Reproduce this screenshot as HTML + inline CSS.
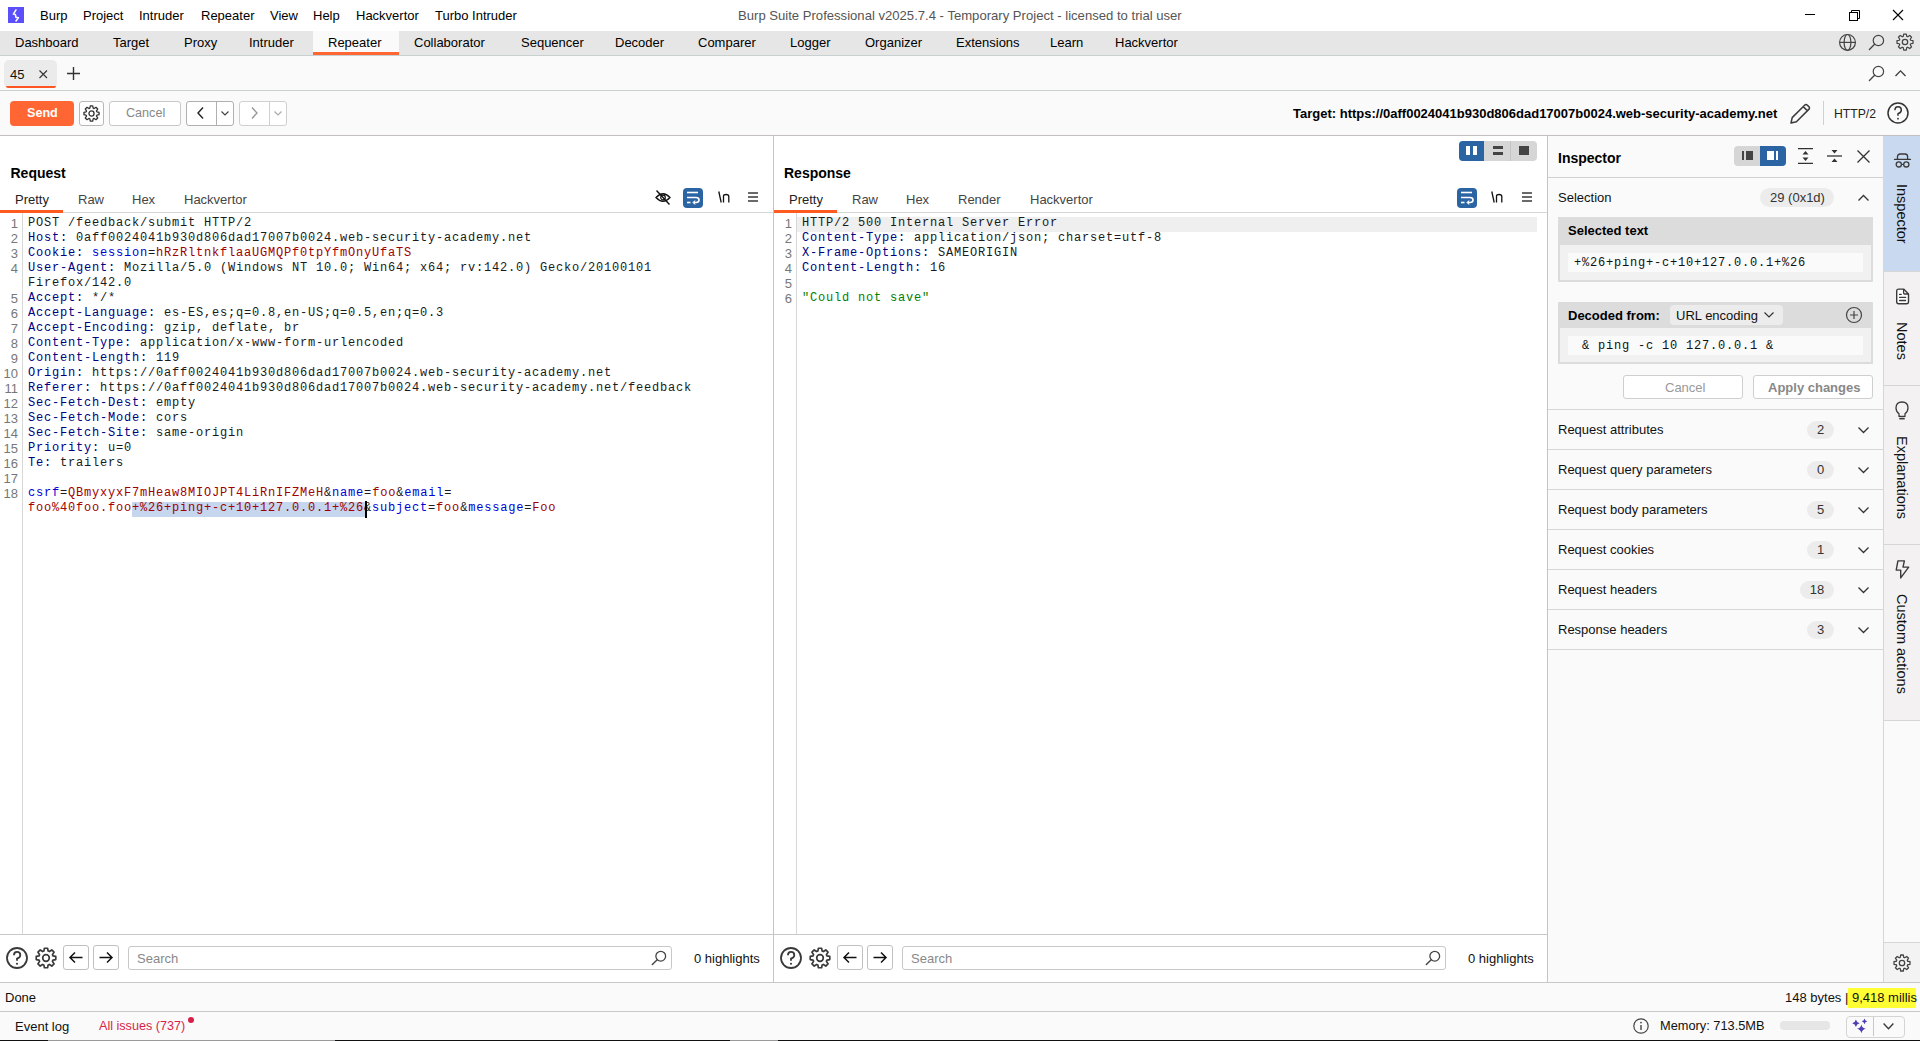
<!DOCTYPE html>
<html><head><meta charset="utf-8">
<style>
*{box-sizing:border-box;margin:0;padding:0}
html,body{width:1920px;height:1041px;overflow:hidden;background:#f9f9f9;font-family:"Liberation Sans",sans-serif;font-size:13px;color:#000}
.a{position:absolute}
.t{position:absolute;white-space:pre;line-height:1}
.mono{font-family:"Liberation Mono",monospace;font-size:12px;letter-spacing:0.8px}
svg{position:absolute;overflow:visible}
</style></head><body>

<div class="a" style="left:0px;top:0px;width:1920px;height:31px;background:#fff;"></div>
<div class="a" style="left:8px;top:7px;width:16px;height:16px;background:#5b4ffc;"></div>
<svg style="left:8px;top:7px" width="16" height="16" viewBox="0 0 16 16"><path d="M8 2.8 L5.4 7.1 L7.4 7.4 L7.9 10.3 L10.4 10.8 L8 14" fill="none" stroke="#fff" stroke-width="1.5" stroke-linejoin="round" stroke-linecap="round"/></svg>
<div class="t" style="left:40px;top:9.00px;font-size:13px;color:#000;font-weight:normal;">Burp</div>
<div class="t" style="left:83px;top:9.00px;font-size:13px;color:#000;font-weight:normal;">Project</div>
<div class="t" style="left:139px;top:9.00px;font-size:13px;color:#000;font-weight:normal;">Intruder</div>
<div class="t" style="left:201px;top:9.00px;font-size:13px;color:#000;font-weight:normal;">Repeater</div>
<div class="t" style="left:270px;top:9.00px;font-size:13px;color:#000;font-weight:normal;">View</div>
<div class="t" style="left:313px;top:9.00px;font-size:13px;color:#000;font-weight:normal;">Help</div>
<div class="t" style="left:356px;top:9.00px;font-size:13px;color:#000;font-weight:normal;">Hackvertor</div>
<div class="t" style="left:435px;top:9.00px;font-size:13px;color:#000;font-weight:normal;">Turbo Intruder</div>
<div class="t" style="left:738px;top:8.91px;font-size:13.1px;color:#555;font-weight:normal;">Burp Suite Professional v2025.7.4 - Temporary Project - licensed to trial user</div>
<div class="a" style="left:1805px;top:14px;width:10px;height:1px;background:#000;"></div>
<svg style="left:1849px;top:10px" width="11" height="11" viewBox="0 0 11 11"><rect x="0.5" y="2.5" width="8" height="8" fill="none" stroke="#000" stroke-width="1"/><path d="M2.5 2.5 V0.5 H10.5 V8.5 H8.5" fill="none" stroke="#000" stroke-width="1"/></svg>
<svg style="left:1893px;top:10px" width="10" height="10" viewBox="0 0 10 10"><path d="M0 0 L10 10 M10 0 L0 10" stroke="#000" stroke-width="1.1"/></svg>
<div class="a" style="left:0px;top:31px;width:1920px;height:24px;background:#e6e6e6;"></div>
<div class="a" style="left:0px;top:55px;width:1920px;height:1px;background:#c9d0d0;"></div>
<div class="a" style="left:313px;top:31px;width:86px;height:24px;background:#fafafa;"></div>
<div class="a" style="left:313px;top:52px;width:86px;height:3px;background:#ff6633;"></div>
<div class="t" style="left:15px;top:35.50px;font-size:13px;color:#000;font-weight:normal;">Dashboard</div>
<div class="t" style="left:113px;top:35.50px;font-size:13px;color:#000;font-weight:normal;">Target</div>
<div class="t" style="left:184px;top:35.50px;font-size:13px;color:#000;font-weight:normal;">Proxy</div>
<div class="t" style="left:249px;top:35.50px;font-size:13px;color:#000;font-weight:normal;">Intruder</div>
<div class="t" style="left:328px;top:35.50px;font-size:13px;color:#000;font-weight:normal;">Repeater</div>
<div class="t" style="left:414px;top:35.50px;font-size:13px;color:#000;font-weight:normal;">Collaborator</div>
<div class="t" style="left:521px;top:35.50px;font-size:13px;color:#000;font-weight:normal;">Sequencer</div>
<div class="t" style="left:615px;top:35.50px;font-size:13px;color:#000;font-weight:normal;">Decoder</div>
<div class="t" style="left:698px;top:35.50px;font-size:13px;color:#000;font-weight:normal;">Comparer</div>
<div class="t" style="left:790px;top:35.50px;font-size:13px;color:#000;font-weight:normal;">Logger</div>
<div class="t" style="left:865px;top:35.50px;font-size:13px;color:#000;font-weight:normal;">Organizer</div>
<div class="t" style="left:956px;top:35.50px;font-size:13px;color:#000;font-weight:normal;">Extensions</div>
<div class="t" style="left:1050px;top:35.50px;font-size:13px;color:#000;font-weight:normal;">Learn</div>
<div class="t" style="left:1115px;top:35.50px;font-size:13px;color:#000;font-weight:normal;">Hackvertor</div>
<svg style="left:1839px;top:34px" width="17" height="17" viewBox="0 0 17 17"><circle cx="8.5" cy="8.4" r="7.9" fill="none" stroke="#444" stroke-width="1.2"/><ellipse cx="8.5" cy="8.4" rx="3.4" ry="7.9" fill="none" stroke="#444" stroke-width="1.2"/><path d="M0.6 8.4 H16.4" stroke="#444" stroke-width="1.2"/></svg>
<svg style="left:1868px;top:35px" width="16" height="16" viewBox="0 0 16 16"><circle cx="10.4" cy="5.5" r="5.2" fill="none" stroke="#444" stroke-width="1.2"/><path d="M6.6 9.3 L1.4 14.5" stroke="#444" stroke-width="1.32" stroke-linecap="round"/></svg>
<svg style="left:1896px;top:33px" width="18" height="18" viewBox="0 0 18 18"><path d="M7.24 3.33 L7.71 1.00 L10.29 1.00 L10.76 3.33 L11.77 3.75 L13.74 2.43 L15.57 4.26 L14.25 6.23 L14.67 7.24 L17.00 7.71 L17.00 10.29 L14.67 10.76 L14.25 11.77 L15.57 13.74 L13.74 15.57 L11.77 14.25 L10.76 14.67 L10.29 17.00 L7.71 17.00 L7.24 14.67 L6.23 14.25 L4.26 15.57 L2.43 13.74 L3.75 11.77 L3.33 10.76 L1.00 10.29 L1.00 7.71 L3.33 7.24 L3.75 6.23 L2.43 4.26 L4.26 2.43 L6.23 3.75 Z" fill="none" stroke="#444" stroke-width="1.25" stroke-linejoin="round"/><circle cx="9.0" cy="9.0" r="2.6999999999999997" fill="none" stroke="#444" stroke-width="1.25"/></svg>
<div class="a" style="left:0px;top:56px;width:1920px;height:34px;background:#fafafa;"></div>
<div class="a" style="left:0px;top:90px;width:1920px;height:1px;background:#c9d0d0;"></div>
<div class="a" style="left:4px;top:60px;width:53px;height:28px;background:#ebebeb;border-radius:5px"></div>
<div class="a" style="left:5.5px;top:86px;width:50px;height:2px;background:#ff5522;border-radius:0 0 3px 3px"></div>
<div class="t" style="left:10px;top:68.00px;font-size:13px;color:#111;font-weight:normal;">45</div>
<svg style="left:38.7px;top:70px" width="8.5" height="8.5" viewBox="0 0 8.5 8.5"><path d="M0.5 0.5 L8 8 M8 0.5 L0.5 8" stroke="#333" stroke-width="1.1"/></svg>
<svg style="left:67px;top:67px" width="13" height="13" viewBox="0 0 13 13"><path d="M6.5 0 V13 M0 6.5 H13" stroke="#333" stroke-width="1.4"/></svg>
<svg style="left:1868px;top:66px" width="16" height="16" viewBox="0 0 16 16"><circle cx="10.4" cy="5.5" r="5.2" fill="none" stroke="#444" stroke-width="1.2"/><path d="M6.6 9.3 L1.4 14.5" stroke="#444" stroke-width="1.32" stroke-linecap="round"/></svg>
<svg style="left:1895px;top:70px" width="11" height="7" viewBox="0 0 11 7"><path d="M0.5 6 L5.5 0.9 L10.5 6" fill="none" stroke="#3a3a3a" stroke-width="1.3"/></svg>
<div class="a" style="left:0px;top:91px;width:1920px;height:44px;background:#fafafa;"></div>
<div class="a" style="left:0px;top:135px;width:1920px;height:1px;background:#c4c0c0;"></div>
<div class="a" style="left:10px;top:101px;width:64px;height:25px;background:#ff6633;border-radius:4px"></div>
<div class="t" style="left:27px;top:107.33px;font-size:12.6px;color:#fff;font-weight:bold;">Send</div>
<div class="a" style="left:79px;top:101px;width:25px;height:25px;background:#fff;border:1px solid #b8b8b8;border-radius:3px"></div>
<svg style="left:83px;top:105px" width="17" height="17" viewBox="0 0 17 17"><path d="M6.84 3.14 L7.28 0.95 L9.72 0.95 L10.16 3.14 L11.12 3.54 L12.98 2.30 L14.70 4.02 L13.46 5.88 L13.86 6.84 L16.05 7.28 L16.05 9.72 L13.86 10.16 L13.46 11.12 L14.70 12.98 L12.98 14.70 L11.12 13.46 L10.16 13.86 L9.72 16.05 L7.28 16.05 L6.84 13.86 L5.88 13.46 L4.02 14.70 L2.30 12.98 L3.54 11.12 L3.14 10.16 L0.95 9.72 L0.95 7.28 L3.14 6.84 L3.54 5.88 L2.30 4.02 L4.02 2.30 L5.88 3.54 Z" fill="none" stroke="#333" stroke-width="1.3" stroke-linejoin="round"/><circle cx="8.5" cy="8.5" r="2.55" fill="none" stroke="#333" stroke-width="1.3"/></svg>
<div class="a" style="left:109px;top:101px;width:72px;height:25px;background:#fff;border:1px solid #c8c8c8;border-radius:3px"></div>
<div class="t" style="left:126px;top:107.33px;font-size:12.6px;color:#888;font-weight:normal;">Cancel</div>
<div class="a" style="left:186px;top:101px;width:48px;height:25px;background:#fff;border:1px solid #b0b0b0;border-radius:3px"></div>
<div class="a" style="left:216px;top:101px;width:1px;height:25px;background:#b0b0b0;"></div>
<svg style="left:197px;top:107px" width="7" height="12" viewBox="0 0 7 12"><path d="M6 0.5 L1 6 L6 11.5" fill="none" stroke="#222" stroke-width="1.4"/></svg>
<svg style="left:221px;top:111px" width="8" height="5" viewBox="0 0 8 5"><path d="M0.5 0.5 L4 4 L7.5 0.5" fill="none" stroke="#444" stroke-width="1.2"/></svg>
<div class="a" style="left:239px;top:101px;width:48px;height:25px;background:#fff;border:1px solid #d0d0d0;border-radius:3px"></div>
<div class="a" style="left:269px;top:101px;width:1px;height:25px;background:#d0d0d0;"></div>
<svg style="left:251px;top:107px" width="7" height="12" viewBox="0 0 7 12"><path d="M1 0.5 L6 6 L1 11.5" fill="none" stroke="#999" stroke-width="1.4"/></svg>
<svg style="left:274px;top:111px" width="8" height="5" viewBox="0 0 8 5"><path d="M0.5 0.5 L4 4 L7.5 0.5" fill="none" stroke="#aaa" stroke-width="1.2"/></svg>
<div class="t" style="left:1293px;top:107.00px;font-size:13px;color:#000;font-weight:bold;">Target: https://0aff0024041b930d806dad17007b0024.web-security-academy.net</div>
<svg style="left:1789px;top:102px" width="23" height="23" viewBox="0 0 23 23"><path d="M2 21 L3.2 15.6 L15.6 3.2 Q17 1.8 18.4 3.2 L19.8 4.6 Q21.2 6 19.8 7.4 L7.4 19.8 Z M14.2 4.6 L18.4 8.8" fill="none" stroke="#3a3a3a" stroke-width="1.5" stroke-linejoin="round"/></svg>
<div class="a" style="left:1823px;top:101px;width:1px;height:24px;background:#d0d0d0;"></div>
<div class="t" style="left:1834px;top:107.67px;font-size:12.2px;color:#222;font-weight:normal;">HTTP/2</div>
<svg style="left:1887px;top:102px" width="22" height="22" viewBox="0 0 22 22"><circle cx="11.0" cy="11.0" r="10.0" fill="none" stroke="#333" stroke-width="1.5"/><path d="M7.92 8.36 Q7.92 4.84 11.0 4.84 Q14.3 4.84 14.3 8.14 Q14.3 10.34 11.0 11.66 L11.0 13.86" fill="none" stroke="#333" stroke-width="1.5"/><circle cx="11.0" cy="16.72" r="0.8999999999999999" fill="#333"/></svg>
<div class="a" style="left:0px;top:136px;width:773px;height:798px;background:#fff;"></div>
<div class="a" style="left:773px;top:136px;width:1px;height:846px;background:#c4c4c4;"></div>
<div class="a" style="left:774px;top:136px;width:773px;height:798px;background:#fff;"></div>
<div class="a" style="left:1547px;top:136px;width:1px;height:846px;background:#c4c4c4;"></div>
<div class="a" style="left:1548px;top:136px;width:335px;height:846px;background:#fafafa;"></div>
<div class="a" style="left:1883px;top:136px;width:1px;height:846px;background:#d6d6d6;"></div>
<div class="a" style="left:1884px;top:136px;width:36px;height:846px;background:#fafafa;"></div>
<div class="t" style="left:10.5px;top:166.15px;font-size:14px;color:#000;font-weight:bold;">Request</div>
<div class="t" style="left:15px;top:193.00px;font-size:13px;color:#222;font-weight:normal;">Pretty</div>
<div class="t" style="left:78px;top:193.00px;font-size:13px;color:#444;font-weight:normal;">Raw</div>
<div class="t" style="left:132px;top:193.00px;font-size:13px;color:#444;font-weight:normal;">Hex</div>
<div class="t" style="left:184px;top:193.00px;font-size:13px;color:#444;font-weight:normal;">Hackvertor</div>
<div class="a" style="left:0px;top:212px;width:773px;height:1px;background:#d4d8d8;"></div>
<div class="a" style="left:0px;top:210px;width:63px;height:2.5px;background:#ff5a1f;"></div>
<svg style="left:655px;top:190px" width="16" height="15" viewBox="0 0 16 15"><path d="M1 7.5 Q8 0 15 7.5 Q8 15 1 7.5 Z" fill="none" stroke="#111" stroke-width="1.3"/><circle cx="8" cy="7.5" r="2.3" fill="none" stroke="#111" stroke-width="1.2"/><path d="M1.5 0.5 L14.5 14.5" stroke="#111" stroke-width="1.4"/></svg>
<div class="a" style="left:683px;top:188px;width:20px;height:20px;background:#2b64a3;border-radius:4px"></div>
<svg style="left:683px;top:188px" width="20" height="20" viewBox="0 0 20 20"><path d="M4 4.5 H15" stroke="#fff" stroke-width="1.6"/><path d="M4 9.5 H13 Q16 9.5 16 12 Q16 14.5 13 14.5 H11" fill="none" stroke="#fff" stroke-width="1.6"/><path d="M12 12.5 L10 14.5 L12 16.5" fill="#fff" stroke="#fff" stroke-width="1"/><path d="M4 14.5 H7.5" stroke="#fff" stroke-width="1.6"/></svg>
<svg style="left:718px;top:191px" width="12" height="12" viewBox="0 0 12 12"><path d="M0.8 0.5 L3.2 11.5" stroke="#111" stroke-width="1.3"/><path d="M5.5 11.5 V5 Q5.5 3.5 8 3.5 Q10.8 3.5 10.8 5.5 V11.5" fill="none" stroke="#111" stroke-width="1.3"/></svg>
<svg style="left:748px;top:192px" width="10" height="10" viewBox="0 0 10 10"><path d="M0 1 H10 M0 5 H10 M0 9 H10" stroke="#3a3a3a" stroke-width="1.3"/></svg>
<div class="a" style="left:22px;top:213px;width:1px;height:721px;background:#d8d8d8;"></div>
<div class="a" style="left:132px;top:502px;width:233px;height:15px;background:#c6d6ee;"></div>
<div class="t" style="right:1902px;top:216.50px;font-size:13px;color:#777">1</div>
<div class="t mono" style="left:28px;top:216.80px;"><span style="color:#1a1a1a">POST /feedback/submit HTTP/2</span></div>
<div class="t" style="right:1902px;top:231.50px;font-size:13px;color:#777">2</div>
<div class="t mono" style="left:28px;top:231.80px;"><span style="color:#000080">Host:</span><span style="color:#1a1a1a"> 0aff0024041b930d806dad17007b0024.web-security-academy.net</span></div>
<div class="t" style="right:1902px;top:246.50px;font-size:13px;color:#777">3</div>
<div class="t mono" style="left:28px;top:246.80px;"><span style="color:#000080">Cookie:</span><span style="color:#1a1a1a"> </span><span style="color:#0000d8">session</span><span style="color:#1a1a1a">=</span><span style="color:#a00000">hRzRltnkflaaUGMQPf0tpYfmOnyUfaTS</span></div>
<div class="t" style="right:1902px;top:261.50px;font-size:13px;color:#777">4</div>
<div class="t mono" style="left:28px;top:261.80px;"><span style="color:#000080">User-Agent:</span><span style="color:#1a1a1a"> Mozilla/5.0 (Windows NT 10.0; Win64; x64; rv:142.0) Gecko/20100101</span></div>
<div class="t mono" style="left:28px;top:276.80px;"><span style="color:#1a1a1a">Firefox/142.0</span></div>
<div class="t" style="right:1902px;top:291.50px;font-size:13px;color:#777">5</div>
<div class="t mono" style="left:28px;top:291.80px;"><span style="color:#000080">Accept:</span><span style="color:#1a1a1a"> */*</span></div>
<div class="t" style="right:1902px;top:306.50px;font-size:13px;color:#777">6</div>
<div class="t mono" style="left:28px;top:306.80px;"><span style="color:#000080">Accept-Language:</span><span style="color:#1a1a1a"> es-ES,es;q=0.8,en-US;q=0.5,en;q=0.3</span></div>
<div class="t" style="right:1902px;top:321.50px;font-size:13px;color:#777">7</div>
<div class="t mono" style="left:28px;top:321.80px;"><span style="color:#000080">Accept-Encoding:</span><span style="color:#1a1a1a"> gzip, deflate, br</span></div>
<div class="t" style="right:1902px;top:336.50px;font-size:13px;color:#777">8</div>
<div class="t mono" style="left:28px;top:336.80px;"><span style="color:#000080">Content-Type:</span><span style="color:#1a1a1a"> application/x-www-form-urlencoded</span></div>
<div class="t" style="right:1902px;top:351.50px;font-size:13px;color:#777">9</div>
<div class="t mono" style="left:28px;top:351.80px;"><span style="color:#000080">Content-Length:</span><span style="color:#1a1a1a"> 119</span></div>
<div class="t" style="right:1902px;top:366.50px;font-size:13px;color:#777">10</div>
<div class="t mono" style="left:28px;top:366.80px;"><span style="color:#000080">Origin:</span><span style="color:#1a1a1a"> https://0aff0024041b930d806dad17007b0024.web-security-academy.net</span></div>
<div class="t" style="right:1902px;top:381.50px;font-size:13px;color:#777">11</div>
<div class="t mono" style="left:28px;top:381.80px;"><span style="color:#000080">Referer:</span><span style="color:#1a1a1a"> https://0aff0024041b930d806dad17007b0024.web-security-academy.net/feedback</span></div>
<div class="t" style="right:1902px;top:396.50px;font-size:13px;color:#777">12</div>
<div class="t mono" style="left:28px;top:396.80px;"><span style="color:#000080">Sec-Fetch-Dest:</span><span style="color:#1a1a1a"> empty</span></div>
<div class="t" style="right:1902px;top:411.50px;font-size:13px;color:#777">13</div>
<div class="t mono" style="left:28px;top:411.80px;"><span style="color:#000080">Sec-Fetch-Mode:</span><span style="color:#1a1a1a"> cors</span></div>
<div class="t" style="right:1902px;top:426.50px;font-size:13px;color:#777">14</div>
<div class="t mono" style="left:28px;top:426.80px;"><span style="color:#000080">Sec-Fetch-Site:</span><span style="color:#1a1a1a"> same-origin</span></div>
<div class="t" style="right:1902px;top:441.50px;font-size:13px;color:#777">15</div>
<div class="t mono" style="left:28px;top:441.80px;"><span style="color:#000080">Priority:</span><span style="color:#1a1a1a"> u=0</span></div>
<div class="t" style="right:1902px;top:456.50px;font-size:13px;color:#777">16</div>
<div class="t mono" style="left:28px;top:456.80px;"><span style="color:#000080">Te:</span><span style="color:#1a1a1a"> trailers</span></div>
<div class="t" style="right:1902px;top:471.50px;font-size:13px;color:#777">17</div>
<div class="t" style="right:1902px;top:486.50px;font-size:13px;color:#777">18</div>
<div class="t mono" style="left:28px;top:486.80px;"><span style="color:#0000d8">csrf</span><span style="color:#1a1a1a">=</span><span style="color:#a00000">QBmyxyxF7mHeaw8MIOJPT4LiRnIFZMeH</span><span style="color:#1a1a1a">&amp;</span><span style="color:#0000d8">name</span><span style="color:#1a1a1a">=</span><span style="color:#a00000">foo</span><span style="color:#1a1a1a">&amp;</span><span style="color:#0000d8">email</span><span style="color:#1a1a1a">=</span></div>
<div class="t mono" style="left:28px;top:501.80px;"><span style="color:#a00000">foo%40foo.foo+%26+ping+-c+10+127.0.0.1+%26</span><span style="color:#1a1a1a">&amp;</span><span style="color:#0000d8">subject</span><span style="color:#1a1a1a">=</span><span style="color:#a00000">foo</span><span style="color:#1a1a1a">&amp;</span><span style="color:#0000d8">message</span><span style="color:#1a1a1a">=</span><span style="color:#a00000">Foo</span></div>
<div class="a" style="left:364.5px;top:501px;width:2px;height:17px;background:#000;"></div>
<div class="t" style="left:784px;top:166.15px;font-size:14px;color:#000;font-weight:bold;">Response</div>
<div class="t" style="left:789px;top:193.00px;font-size:13px;color:#222;font-weight:normal;">Pretty</div>
<div class="t" style="left:852px;top:193.00px;font-size:13px;color:#444;font-weight:normal;">Raw</div>
<div class="t" style="left:906px;top:193.00px;font-size:13px;color:#444;font-weight:normal;">Hex</div>
<div class="t" style="left:958px;top:193.00px;font-size:13px;color:#444;font-weight:normal;">Render</div>
<div class="t" style="left:1030px;top:193.00px;font-size:13px;color:#444;font-weight:normal;">Hackvertor</div>
<div class="a" style="left:774px;top:212px;width:773px;height:1px;background:#d4d8d8;"></div>
<div class="a" style="left:774px;top:210px;width:63px;height:2.5px;background:#ff5a1f;"></div>
<div class="a" style="left:1459px;top:141px;width:78px;height:20px;background:#d6d6d6;border-radius:4px"></div>
<div class="a" style="left:1459px;top:141px;width:25px;height:20px;background:#2b64a3;border-radius:4px 0 0 4px"></div>
<div class="a" style="left:1510px;top:141px;width:1px;height:20px;background:#c4c4c4;"></div>
<div class="a" style="left:1466px;top:146px;width:4px;height:9px;background:#fff;"></div>
<div class="a" style="left:1473px;top:146px;width:4px;height:9px;background:#fff;"></div>
<div class="a" style="left:1493px;top:146px;width:10px;height:3px;background:#444;"></div>
<div class="a" style="left:1493px;top:152px;width:10px;height:3px;background:#444;"></div>
<div class="a" style="left:1519px;top:146px;width:10px;height:9px;background:#444;"></div>
<div class="a" style="left:1457px;top:188px;width:20px;height:20px;background:#2b64a3;border-radius:4px"></div>
<svg style="left:1457px;top:188px" width="20" height="20" viewBox="0 0 20 20"><path d="M4 4.5 H15" stroke="#fff" stroke-width="1.6"/><path d="M4 9.5 H13 Q16 9.5 16 12 Q16 14.5 13 14.5 H11" fill="none" stroke="#fff" stroke-width="1.6"/><path d="M12 12.5 L10 14.5 L12 16.5" fill="#fff" stroke="#fff" stroke-width="1"/><path d="M4 14.5 H7.5" stroke="#fff" stroke-width="1.6"/></svg>
<svg style="left:1491px;top:191px" width="12" height="12" viewBox="0 0 12 12"><path d="M0.8 0.5 L3.2 11.5" stroke="#111" stroke-width="1.3"/><path d="M5.5 11.5 V5 Q5.5 3.5 8 3.5 Q10.8 3.5 10.8 5.5 V11.5" fill="none" stroke="#111" stroke-width="1.3"/></svg>
<svg style="left:1522px;top:192px" width="10" height="10" viewBox="0 0 10 10"><path d="M0 1 H10 M0 5 H10 M0 9 H10" stroke="#3a3a3a" stroke-width="1.3"/></svg>
<div class="a" style="left:796px;top:213px;width:1px;height:721px;background:#d8d8d8;"></div>
<div class="a" style="left:797px;top:217px;width:740px;height:15px;background:#efefef;"></div>
<div class="t" style="right:1128px;top:216.50px;font-size:13px;color:#777">1</div>
<div class="t mono" style="left:802px;top:216.80px;"><span style="color:#1a1a1a">HTTP/2 500 Internal Server Error</span></div>
<div class="t" style="right:1128px;top:231.50px;font-size:13px;color:#777">2</div>
<div class="t mono" style="left:802px;top:231.80px;"><span style="color:#000080">Content-Type:</span><span style="color:#1a1a1a"> application/json; charset=utf-8</span></div>
<div class="t" style="right:1128px;top:246.50px;font-size:13px;color:#777">3</div>
<div class="t mono" style="left:802px;top:246.80px;"><span style="color:#000080">X-Frame-Options:</span><span style="color:#1a1a1a"> SAMEORIGIN</span></div>
<div class="t" style="right:1128px;top:261.50px;font-size:13px;color:#777">4</div>
<div class="t mono" style="left:802px;top:261.80px;"><span style="color:#000080">Content-Length:</span><span style="color:#1a1a1a"> 16</span></div>
<div class="t" style="right:1128px;top:276.50px;font-size:13px;color:#777">5</div>
<div class="t" style="right:1128px;top:291.50px;font-size:13px;color:#777">6</div>
<div class="t mono" style="left:802px;top:291.80px;"><span style="color:#008000">&quot;Could not save&quot;</span></div>
<div class="t" style="left:1558px;top:151.15px;font-size:14px;color:#000;font-weight:bold;">Inspector</div>
<div class="a" style="left:1548px;top:177px;width:335px;height:1px;background:#d0d0d0;"></div>
<div class="a" style="left:1734px;top:146px;width:52px;height:20px;background:#d6d6d6;border-radius:4px"></div>
<div class="a" style="left:1760px;top:146px;width:26px;height:20px;background:#2b64a3;border-radius:0 4px 4px 0"></div>
<div class="a" style="left:1742px;top:151px;width:2px;height:9px;background:#444;"></div>
<div class="a" style="left:1746px;top:151px;width:7px;height:9px;background:#444;"></div>
<div class="a" style="left:1767px;top:151px;width:7px;height:9px;background:#fff;"></div>
<div class="a" style="left:1776px;top:151px;width:2px;height:9px;background:#fff;"></div>
<svg style="left:1798px;top:148px" width="15" height="16" viewBox="0 0 15 16"><path d="M0 0.7 H15 M0 15.3 H15" stroke="#333" stroke-width="1.3"/><path d="M7.5 3 L4.5 6.5 H10.5 Z M7.5 13 L4.5 9.5 H10.5 Z" fill="#333"/></svg>
<svg style="left:1827px;top:148px" width="15" height="16" viewBox="0 0 15 16"><path d="M0 8 H15" stroke="#333" stroke-width="1.3"/><path d="M7.5 5.5 L4.5 2 H10.5 Z M7.5 10.5 L4.5 14 H10.5 Z" fill="#333"/></svg>
<svg style="left:1857px;top:150px" width="13" height="13" viewBox="0 0 13 13"><path d="M0.5 0.5 L12.5 12.5 M12.5 0.5 L0.5 12.5" stroke="#333" stroke-width="1.3"/></svg>
<div class="t" style="left:1558px;top:191.00px;font-size:13px;color:#111;font-weight:normal;">Selection</div>
<div class="a" style="left:1760px;top:188px;width:74px;height:19px;background:#ececec;border-radius:10px"></div>
<div class="t" style="left:1770px;top:191.00px;font-size:13px;color:#333;font-weight:normal;">29 (0x1d)</div>
<svg style="left:1858px;top:195px" width="11" height="6" viewBox="0 0 11 6"><path d="M0.5 5.5 L5.5 0.5 L10.5 5.5" fill="none" stroke="#333" stroke-width="1.3"/></svg>
<div class="a" style="left:1558px;top:217px;width:315px;height:65px;background:#f2f1f1;border:2px solid #dcdcdc"></div>
<div class="a" style="left:1558px;top:217px;width:315px;height:28px;background:#dcdcdc;"></div>
<div class="t" style="left:1568px;top:224.00px;font-size:13px;color:#000;font-weight:bold;">Selected text</div>
<div class="a" style="left:1568px;top:253px;width:295px;height:19px;background:#fafafa;"></div>
<div class="t mono" style="left:1574px;top:256.80px;"><span style="color:#111">+%26+ping+-c+10+127.0.0.1+%26</span></div>
<div class="a" style="left:1558px;top:302px;width:315px;height:62px;background:#f2f1f1;border:2px solid #dcdcdc"></div>
<div class="a" style="left:1558px;top:302px;width:315px;height:26px;background:#dcdcdc;"></div>
<div class="t" style="left:1568px;top:309.00px;font-size:13px;color:#000;font-weight:bold;">Decoded from:</div>
<div class="a" style="left:1670px;top:305px;width:113px;height:20px;background:#ececec;border-radius:4px"></div>
<div class="t" style="left:1676px;top:309.00px;font-size:13px;color:#111;font-weight:normal;">URL encoding</div>
<svg style="left:1764px;top:312px" width="10" height="6" viewBox="0 0 10 6"><path d="M0.5 0.5 L5 5 L9.5 0.5" fill="none" stroke="#333" stroke-width="1.2"/></svg>
<svg style="left:1845px;top:306px" width="18" height="18" viewBox="0 0 18 18"><circle cx="9" cy="9" r="7.5" fill="none" stroke="#444" stroke-width="1.2"/><path d="M9 5 V13 M5 9 H13" stroke="#444" stroke-width="1.2"/></svg>
<div class="a" style="left:1568px;top:336px;width:295px;height:19px;background:#fafafa;"></div>
<div class="t mono" style="left:1574px;top:339.80px;"><span style="color:#111"> &amp; ping -c 10 127.0.0.1 &amp;</span></div>
<div class="a" style="left:1623px;top:375px;width:120px;height:24px;background:#fff;border:1px solid #cfcfcf;border-radius:3px"></div>
<div class="t" style="left:1665px;top:381.00px;font-size:13px;color:#999;font-weight:normal;">Cancel</div>
<div class="a" style="left:1753px;top:375px;width:120px;height:24px;background:#fff;border:1px solid #cfcfcf;border-radius:3px"></div>
<div class="t" style="left:1768px;top:381.00px;font-size:13px;color:#888;font-weight:bold;">Apply changes</div>
<div class="a" style="left:1548px;top:409px;width:335px;height:1px;background:#d6d6d6;"></div>
<div class="t" style="left:1558px;top:423.00px;font-size:13px;color:#111;font-weight:normal;">Request attributes</div>
<div class="a" style="left:1807px;top:421px;width:27px;height:18px;background:#ececec;border-radius:9px"></div>
<div class="t" style="left:1816.9px;top:423.00px;font-size:13px;color:#333;font-weight:normal;">2</div>
<svg style="left:1858px;top:427px" width="11" height="6" viewBox="0 0 11 6"><path d="M0.5 0.5 L5.5 5.5 L10.5 0.5" fill="none" stroke="#333" stroke-width="1.3"/></svg>
<div class="a" style="left:1548px;top:449px;width:335px;height:1px;background:#d6d6d6;"></div>
<div class="t" style="left:1558px;top:463.00px;font-size:13px;color:#111;font-weight:normal;">Request query parameters</div>
<div class="a" style="left:1807px;top:461px;width:27px;height:18px;background:#ececec;border-radius:9px"></div>
<div class="t" style="left:1816.9px;top:463.00px;font-size:13px;color:#333;font-weight:normal;">0</div>
<svg style="left:1858px;top:467px" width="11" height="6" viewBox="0 0 11 6"><path d="M0.5 0.5 L5.5 5.5 L10.5 0.5" fill="none" stroke="#333" stroke-width="1.3"/></svg>
<div class="a" style="left:1548px;top:489px;width:335px;height:1px;background:#d6d6d6;"></div>
<div class="t" style="left:1558px;top:503.00px;font-size:13px;color:#111;font-weight:normal;">Request body parameters</div>
<div class="a" style="left:1807px;top:501px;width:27px;height:18px;background:#ececec;border-radius:9px"></div>
<div class="t" style="left:1816.9px;top:503.00px;font-size:13px;color:#333;font-weight:normal;">5</div>
<svg style="left:1858px;top:507px" width="11" height="6" viewBox="0 0 11 6"><path d="M0.5 0.5 L5.5 5.5 L10.5 0.5" fill="none" stroke="#333" stroke-width="1.3"/></svg>
<div class="a" style="left:1548px;top:529px;width:335px;height:1px;background:#d6d6d6;"></div>
<div class="t" style="left:1558px;top:543.00px;font-size:13px;color:#111;font-weight:normal;">Request cookies</div>
<div class="a" style="left:1807px;top:541px;width:27px;height:18px;background:#ececec;border-radius:9px"></div>
<div class="t" style="left:1816.9px;top:543.00px;font-size:13px;color:#333;font-weight:normal;">1</div>
<svg style="left:1858px;top:547px" width="11" height="6" viewBox="0 0 11 6"><path d="M0.5 0.5 L5.5 5.5 L10.5 0.5" fill="none" stroke="#333" stroke-width="1.3"/></svg>
<div class="a" style="left:1548px;top:569px;width:335px;height:1px;background:#d6d6d6;"></div>
<div class="t" style="left:1558px;top:583.00px;font-size:13px;color:#111;font-weight:normal;">Request headers</div>
<div class="a" style="left:1800px;top:581px;width:34px;height:18px;background:#ececec;border-radius:9px"></div>
<div class="t" style="left:1809.8px;top:583.00px;font-size:13px;color:#333;font-weight:normal;">18</div>
<svg style="left:1858px;top:587px" width="11" height="6" viewBox="0 0 11 6"><path d="M0.5 0.5 L5.5 5.5 L10.5 0.5" fill="none" stroke="#333" stroke-width="1.3"/></svg>
<div class="a" style="left:1548px;top:609px;width:335px;height:1px;background:#d6d6d6;"></div>
<div class="t" style="left:1558px;top:623.00px;font-size:13px;color:#111;font-weight:normal;">Response headers</div>
<div class="a" style="left:1807px;top:621px;width:27px;height:18px;background:#ececec;border-radius:9px"></div>
<div class="t" style="left:1816.9px;top:623.00px;font-size:13px;color:#333;font-weight:normal;">3</div>
<svg style="left:1858px;top:627px" width="11" height="6" viewBox="0 0 11 6"><path d="M0.5 0.5 L5.5 5.5 L10.5 0.5" fill="none" stroke="#333" stroke-width="1.3"/></svg>
<div class="a" style="left:1548px;top:649px;width:335px;height:1px;background:#d6d6d6;"></div>
<div class="a" style="left:1884px;top:136px;width:36px;height:135px;background:#c9daf0;"></div>
<div class="a" style="left:1884px;top:272px;width:36px;height:448px;background:#f3f1f1;"></div>
<div class="a" style="left:1884px;top:720px;width:36px;height:1px;background:#d6d6d6;"></div>
<div class="a" style="left:1884px;top:943px;width:36px;height:39px;background:#f3f3f3;"></div>
<div class="a" style="left:1884px;top:271px;width:36px;height:1px;background:#d6d6d6;"></div>
<div class="a" style="left:1884px;top:385px;width:36px;height:1px;background:#d6d6d6;"></div>
<div class="a" style="left:1884px;top:544px;width:36px;height:1px;background:#d6d6d6;"></div>
<div class="a" style="left:1884px;top:942px;width:36px;height:1px;background:#d6d6d6;"></div>
<div class="t" style="left:1901px;top:184px;font-size:14.5px;color:#111;transform-origin:0 0;transform:rotate(90deg) translate(0,-7.61px)">Inspector</div>
<div class="t" style="left:1901px;top:322px;font-size:14.5px;color:#111;transform-origin:0 0;transform:rotate(90deg) translate(0,-7.61px)">Notes</div>
<div class="t" style="left:1901px;top:436px;font-size:14.5px;color:#111;transform-origin:0 0;transform:rotate(90deg) translate(0,-7.61px)">Explanations</div>
<div class="t" style="left:1901px;top:594px;font-size:14.5px;color:#111;transform-origin:0 0;transform:rotate(90deg) translate(0,-7.61px)">Custom actions</div>
<svg style="left:1894px;top:152px" width="17" height="16" viewBox="0 0 17 16"><path d="M0.6 7.4 H16.4" stroke="#3a3a3a" stroke-width="1.4" stroke-linecap="round"/><path d="M3.5 7.4 V4.6 Q3.5 2 6.2 2 H10.9 Q13.6 2 13.6 4.6 V7.4" fill="none" stroke="#3a3a3a" stroke-width="1.3"/><circle cx="4.8" cy="12.4" r="2.6" fill="none" stroke="#3a3a3a" stroke-width="1.3"/><circle cx="12.3" cy="12.4" r="2.6" fill="none" stroke="#3a3a3a" stroke-width="1.3"/><path d="M7.4 12.4 H9.7" stroke="#3a3a3a" stroke-width="1.1"/></svg>
<svg style="left:1895px;top:287px" width="15" height="19" viewBox="0 0 15 19"><path d="M3.7 2.1 H8.6 L13.5 7 V14.8 Q13.5 16.8 11.5 16.8 H3.7 Q1.7 16.8 1.7 14.8 V4.1 Q1.7 2.1 3.7 2.1 Z" fill="#fff" stroke="#3a3a3a" stroke-width="1.4" stroke-linejoin="round"/><path d="M8.6 2.1 V6 Q8.6 7 9.6 7 H13.5" fill="none" stroke="#3a3a3a" stroke-width="1.3"/><path d="M4.6 7.4 H6.2 M4.6 10.4 H10.6 M4.6 13.5 H10.6" stroke="#3a3a3a" stroke-width="1.3" stroke-linecap="round"/></svg>
<svg style="left:1894px;top:401px" width="16" height="20" viewBox="0 0 16 20"><path d="M5 12.8 Q2 10.5 2 7 Q2 1 8 1 Q14 1 14 7 Q14 10.5 11 12.8 V15.4 H5 Z" fill="none" stroke="#3a3a3a" stroke-width="1.3" stroke-linejoin="round"/><path d="M5.3 17.6 H10.7" stroke="#3a3a3a" stroke-width="1.7"/></svg>
<svg style="left:1895px;top:559px" width="15" height="20" viewBox="0 0 15 20"><path d="M2.9 1.9 H9.4 L8 8.1 H13.7 L5.7 18.9 V11.1 H1.2 Z" fill="none" stroke="#3a3a3a" stroke-width="1.4" stroke-linejoin="round"/></svg>
<svg style="left:1893px;top:954px" width="18" height="18" viewBox="0 0 18 18"><path d="M7.24 3.33 L7.71 1.00 L10.29 1.00 L10.76 3.33 L11.77 3.75 L13.74 2.43 L15.57 4.26 L14.25 6.23 L14.67 7.24 L17.00 7.71 L17.00 10.29 L14.67 10.76 L14.25 11.77 L15.57 13.74 L13.74 15.57 L11.77 14.25 L10.76 14.67 L10.29 17.00 L7.71 17.00 L7.24 14.67 L6.23 14.25 L4.26 15.57 L2.43 13.74 L3.75 11.77 L3.33 10.76 L1.00 10.29 L1.00 7.71 L3.33 7.24 L3.75 6.23 L2.43 4.26 L4.26 2.43 L6.23 3.75 Z" fill="none" stroke="#444" stroke-width="1.3" stroke-linejoin="round"/><circle cx="9.0" cy="9.0" r="2.6999999999999997" fill="none" stroke="#444" stroke-width="1.3"/></svg>
<div class="a" style="left:0px;top:934px;width:1547px;height:1px;background:#c8c8c8;"></div>
<div class="a" style="left:0px;top:935px;width:773px;height:47px;background:#fff;"></div>
<div class="a" style="left:774px;top:935px;width:773px;height:47px;background:#fff;"></div>
<svg style="left:6px;top:947px" width="22" height="22" viewBox="0 0 22 22"><circle cx="11.0" cy="11.0" r="10.0" fill="none" stroke="#3a3a3a" stroke-width="1.8"/><path d="M7.92 8.36 Q7.92 4.84 11.0 4.84 Q14.3 4.84 14.3 8.14 Q14.3 10.34 11.0 11.66 L11.0 13.86" fill="none" stroke="#3a3a3a" stroke-width="1.8"/><circle cx="11.0" cy="16.72" r="1.08" fill="#3a3a3a"/></svg>
<svg style="left:35px;top:947px" width="22" height="22" viewBox="0 0 22 22"><path d="M8.85 4.06 L9.42 1.23 L12.58 1.23 L13.15 4.06 L14.39 4.58 L16.80 2.97 L19.03 5.20 L17.42 7.61 L17.94 8.85 L20.77 9.42 L20.77 12.58 L17.94 13.15 L17.42 14.39 L19.03 16.80 L16.80 19.03 L14.39 17.42 L13.15 17.94 L12.58 20.77 L9.42 20.77 L8.85 17.94 L7.61 17.42 L5.20 19.03 L2.97 16.80 L4.58 14.39 L4.06 13.15 L1.23 12.58 L1.23 9.42 L4.06 8.85 L4.58 7.61 L2.97 5.20 L5.20 2.97 L7.61 4.58 Z" fill="none" stroke="#3a3a3a" stroke-width="1.7" stroke-linejoin="round"/><circle cx="11.0" cy="11.0" r="3.3" fill="none" stroke="#3a3a3a" stroke-width="1.7"/></svg>
<div class="a" style="left:63px;top:945px;width:26px;height:25px;background:#fff;border:1px solid #c0c0c0;border-radius:3px"></div>
<svg style="left:69px;top:952px" width="14" height="11" viewBox="0 0 14 11"><path d="M13.5 5.5 H1 M6 0.5 L1 5.5 L6 10.5" fill="none" stroke="#111" stroke-width="1.5"/></svg>
<div class="a" style="left:93px;top:945px;width:26px;height:25px;background:#fff;border:1px solid #c0c0c0;border-radius:3px"></div>
<svg style="left:99px;top:952px" width="14" height="11" viewBox="0 0 14 11"><path d="M0.5 5.5 H13 M8 0.5 L13 5.5 L8 10.5" fill="none" stroke="#111" stroke-width="1.5"/></svg>
<div class="a" style="left:128px;top:946px;width:544px;height:24px;background:#fff;border:1px solid #c8c8c8;border-radius:3px"></div>
<div class="t" style="left:137px;top:952.00px;font-size:13px;color:#888;font-weight:normal;">Search</div>
<svg style="left:651px;top:951px" width="15" height="15" viewBox="0 0 15 15"><circle cx="9.75" cy="5.15625" r="4.875" fill="none" stroke="#444" stroke-width="1.3"/><path d="M6.1875 8.71875 L1.3125 13.59375" stroke="#444" stroke-width="1.4300000000000002" stroke-linecap="round"/></svg>
<div class="t" style="left:694px;top:952.00px;font-size:13px;color:#111;font-weight:normal;">0 highlights</div>
<svg style="left:780px;top:947px" width="22" height="22" viewBox="0 0 22 22"><circle cx="11.0" cy="11.0" r="10.0" fill="none" stroke="#3a3a3a" stroke-width="1.8"/><path d="M7.92 8.36 Q7.92 4.84 11.0 4.84 Q14.3 4.84 14.3 8.14 Q14.3 10.34 11.0 11.66 L11.0 13.86" fill="none" stroke="#3a3a3a" stroke-width="1.8"/><circle cx="11.0" cy="16.72" r="1.08" fill="#3a3a3a"/></svg>
<svg style="left:809px;top:947px" width="22" height="22" viewBox="0 0 22 22"><path d="M8.85 4.06 L9.42 1.23 L12.58 1.23 L13.15 4.06 L14.39 4.58 L16.80 2.97 L19.03 5.20 L17.42 7.61 L17.94 8.85 L20.77 9.42 L20.77 12.58 L17.94 13.15 L17.42 14.39 L19.03 16.80 L16.80 19.03 L14.39 17.42 L13.15 17.94 L12.58 20.77 L9.42 20.77 L8.85 17.94 L7.61 17.42 L5.20 19.03 L2.97 16.80 L4.58 14.39 L4.06 13.15 L1.23 12.58 L1.23 9.42 L4.06 8.85 L4.58 7.61 L2.97 5.20 L5.20 2.97 L7.61 4.58 Z" fill="none" stroke="#3a3a3a" stroke-width="1.7" stroke-linejoin="round"/><circle cx="11.0" cy="11.0" r="3.3" fill="none" stroke="#3a3a3a" stroke-width="1.7"/></svg>
<div class="a" style="left:837px;top:945px;width:26px;height:25px;background:#fff;border:1px solid #c0c0c0;border-radius:3px"></div>
<svg style="left:843px;top:952px" width="14" height="11" viewBox="0 0 14 11"><path d="M13.5 5.5 H1 M6 0.5 L1 5.5 L6 10.5" fill="none" stroke="#111" stroke-width="1.5"/></svg>
<div class="a" style="left:867px;top:945px;width:26px;height:25px;background:#fff;border:1px solid #c0c0c0;border-radius:3px"></div>
<svg style="left:873px;top:952px" width="14" height="11" viewBox="0 0 14 11"><path d="M0.5 5.5 H13 M8 0.5 L13 5.5 L8 10.5" fill="none" stroke="#111" stroke-width="1.5"/></svg>
<div class="a" style="left:902px;top:946px;width:544px;height:24px;background:#fff;border:1px solid #c8c8c8;border-radius:3px"></div>
<div class="t" style="left:911px;top:952.00px;font-size:13px;color:#888;font-weight:normal;">Search</div>
<svg style="left:1425px;top:951px" width="15" height="15" viewBox="0 0 15 15"><circle cx="9.75" cy="5.15625" r="4.875" fill="none" stroke="#444" stroke-width="1.3"/><path d="M6.1875 8.71875 L1.3125 13.59375" stroke="#444" stroke-width="1.4300000000000002" stroke-linecap="round"/></svg>
<div class="t" style="left:1468px;top:952.00px;font-size:13px;color:#111;font-weight:normal;">0 highlights</div>
<div class="a" style="left:0px;top:982px;width:1920px;height:1px;background:#c8c8c8;"></div>
<div class="a" style="left:0px;top:983px;width:1920px;height:28px;background:#fafafa;"></div>
<div class="a" style="left:0px;top:1011px;width:1920px;height:1px;background:#c8c8c8;"></div>
<div class="a" style="left:0px;top:1012px;width:1920px;height:28px;background:#fafafa;"></div>
<div class="t" style="left:5px;top:991.00px;font-size:13px;color:#111;font-weight:normal;">Done</div>
<div class="a" style="left:1848px;top:988px;width:68px;height:20px;background:#ffff33;"></div>
<div class="t" style="left:1785px;top:991.00px;font-size:13px;color:#111;font-weight:normal;">148 bytes | 9,418 millis</div>
<div class="t" style="left:15px;top:1020.00px;font-size:13px;color:#111;font-weight:normal;">Event log</div>
<div class="t" style="left:99px;top:1020.33px;font-size:12.6px;color:#d91e48;font-weight:normal;">All issues (737)</div>
<div class="a" style="left:188px;top:1017px;width:6px;height:6px;background:#d91e48;border-radius:3px"></div>
<svg style="left:1633px;top:1018px" width="16" height="16" viewBox="0 0 16 16"><circle cx="8" cy="8" r="7.2" fill="none" stroke="#444" stroke-width="1.2"/><path d="M8 7 V12" stroke="#444" stroke-width="1.4"/><circle cx="8" cy="4.6" r="0.9" fill="#444"/></svg>
<div class="t" style="left:1660px;top:1020.16px;font-size:12.8px;color:#111;font-weight:normal;">Memory: 713.5MB</div>
<div class="a" style="left:1780px;top:1021px;width:50px;height:9px;background:#e6e6e6;border-radius:4px"></div>
<div class="a" style="left:1845.5px;top:1015.5px;width:59px;height:22px;background:#fafafa;border:1px solid #d4d4d4;border-radius:4px"></div>
<div class="a" style="left:1873px;top:1017px;width:1px;height:19px;background:#c8c8c8;"></div>
<svg style="left:1846px;top:1016px" width="24" height="20" viewBox="0 0 24 20"><path d="M9.90 3.60 Q10.57 6.63 13.60 7.30 Q10.57 7.97 9.90 11.00 Q9.23 7.97 6.20 7.30 Q9.23 6.63 9.90 3.60 Z M18.50 2.40 Q19.02 4.78 21.40 5.30 Q19.02 5.82 18.50 8.20 Q17.98 5.82 15.60 5.30 Q17.98 4.78 18.50 2.40 Z M15.40 8.40 Q16.19 12.01 19.80 12.80 Q16.19 13.59 15.40 17.20 Q14.61 13.59 11.00 12.80 Q14.61 12.01 15.40 8.40 Z" fill="#4a3fb5"/></svg>
<svg style="left:1883px;top:1023px" width="11" height="7" viewBox="0 0 11 7"><path d="M0.6 0.6 L5.5 5.8 L10.4 0.6" fill="none" stroke="#3a3a3a" stroke-width="1.4"/></svg>
<div class="a" style="left:0px;top:1040px;width:1920px;height:1px;background:#111;"></div>
<div class="a" style="left:48px;top:1040px;width:287px;height:1px;background:#9a9a9a;"></div>
<div class="a" style="left:730px;top:1040px;width:48px;height:1px;background:#9a9a9a;"></div>
</body></html>
